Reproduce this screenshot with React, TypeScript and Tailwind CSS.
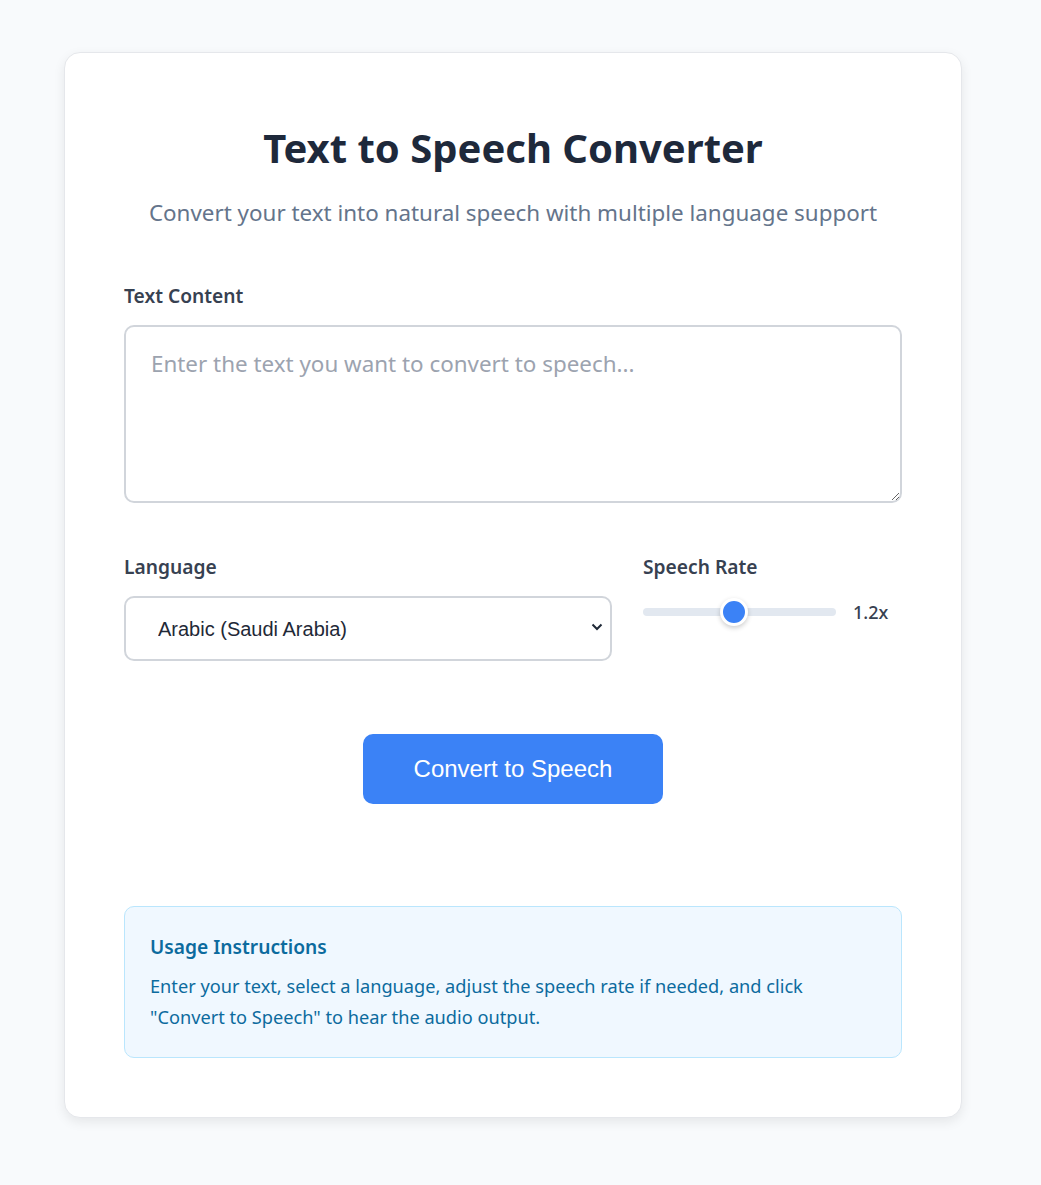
import React, { useState } from "react";

export default function App() {
  const [rate] = useState(1.2);
  const pct = (rate - 0.5) / 1.5;
  return (
    <div className="min-h-screen bg-[#f8fafc]">
      <div className="w-[1026px] pt-[52px] pb-[67px]">
        <div
          className="mx-auto w-[898px] rounded-[16px] border border-[#e5e7eb] bg-white px-[59px] pt-[65px] pb-[59px] shadow-[0_4px_12px_rgba(0,0,0,0.08)]"
          style={{ fontFamily: '"Noto Sans", sans-serif' }}
        >
          <h1 className="text-center text-[40px] font-bold leading-[60px] text-[#1e293b]">
            Text to Speech Converter
          </h1>
          <p className="mt-[20px] text-center text-[22.4px] leading-[30px] text-[#64748b]">
            Convert your text into natural speech with multiple language support
          </p>

          <label className="mt-[54px] block text-[19.2px] font-semibold leading-[27px] text-[#374151]">
            Text Content
          </label>
          <textarea
            className="mt-[16px] block h-[178px] w-full resize-y rounded-[10px] border-2 border-[#d1d5db] px-[25px] py-[24px] text-[22.4px] leading-[26px] text-[#374151] outline-none placeholder:text-[#9ca3af]"
            style={{ fontFamily: '"Noto Sans", sans-serif' }}
            placeholder="Enter the text you want to convert to speech..."
          />

          <div className="mt-[50px] grid grid-cols-[488px_1fr] gap-[31px]">
            <div>
              <label className="block text-[19.2px] font-semibold leading-[27px] text-[#374151]">
                Language
              </label>
              <div className="relative mt-[16px]">
                <select
                  className="block h-[65px] w-full appearance-none rounded-[10px] border-2 border-[#d1d5db] bg-white pl-[32px] pr-[40px] text-[20px] text-[#1f2937] outline-none"
                  style={{ fontFamily: '"Liberation Sans", Arial, sans-serif' }}
                  defaultValue="ar-SA"
                >
                  <option value="ar-SA">Arabic (Saudi Arabia)</option>
                  <option value="en-US">English (United States)</option>
                </select>
                <svg
                  className="pointer-events-none absolute right-[8px] top-[26px]"
                  width="14"
                  height="10"
                  viewBox="0 0 14 10"
                >
                  <path d="M2.5 2.5 L7 7 L11.5 2.5" fill="none" stroke="#1f2937" strokeWidth="2" />
                </svg>
              </div>
            </div>
            <div>
              <label className="block text-[19.2px] font-semibold leading-[27px] text-[#374151]">
                Speech Rate
              </label>
              <div className="mt-[16px] flex h-[32px] items-center gap-[17px]">
                <div className="relative h-[8px] w-[193px] rounded-full bg-[#e2e8f0]">
                  <div
                    className="absolute top-1/2 h-[28px] w-[28px] -translate-y-1/2 rounded-full border-[3px] border-white bg-[#3b82f6] shadow-[0_2px_5px_rgba(0,0,0,0.2)]"
                    style={{ left: `${pct * (193 - 26) - 1}px` }}
                  />
                </div>
                <span className="text-[18px] font-medium text-[#374151]">{rate.toFixed(1)}x</span>
              </div>
            </div>
          </div>

          <div className="mt-[73px] flex justify-center">
            <button
              className="h-[70px] w-[300px] rounded-[10px] bg-[#3b82f6] text-[24px] text-white"
              style={{ fontFamily: '"Liberation Sans", Arial, sans-serif' }}
            >
              Convert to Speech
            </button>
          </div>

          <div className="mt-[102px] rounded-[10px] border border-[#bae6fd] bg-[#f0f8ff] px-[25px] pt-[24px] pb-[24px]">
            <h3 className="text-[19.2px] font-semibold leading-[32px] text-[#0c6b9e]">
              Usage Instructions
            </h3>
            <p className="mt-[8px] text-[18.2px] leading-[31px] text-[#0c6b9e]">
              Enter your text, select a language, adjust the speech rate if needed, and click
              <br />
              "Convert to Speech" to hear the audio output.
            </p>
          </div>
        </div>
      </div>
    </div>
  );
}
